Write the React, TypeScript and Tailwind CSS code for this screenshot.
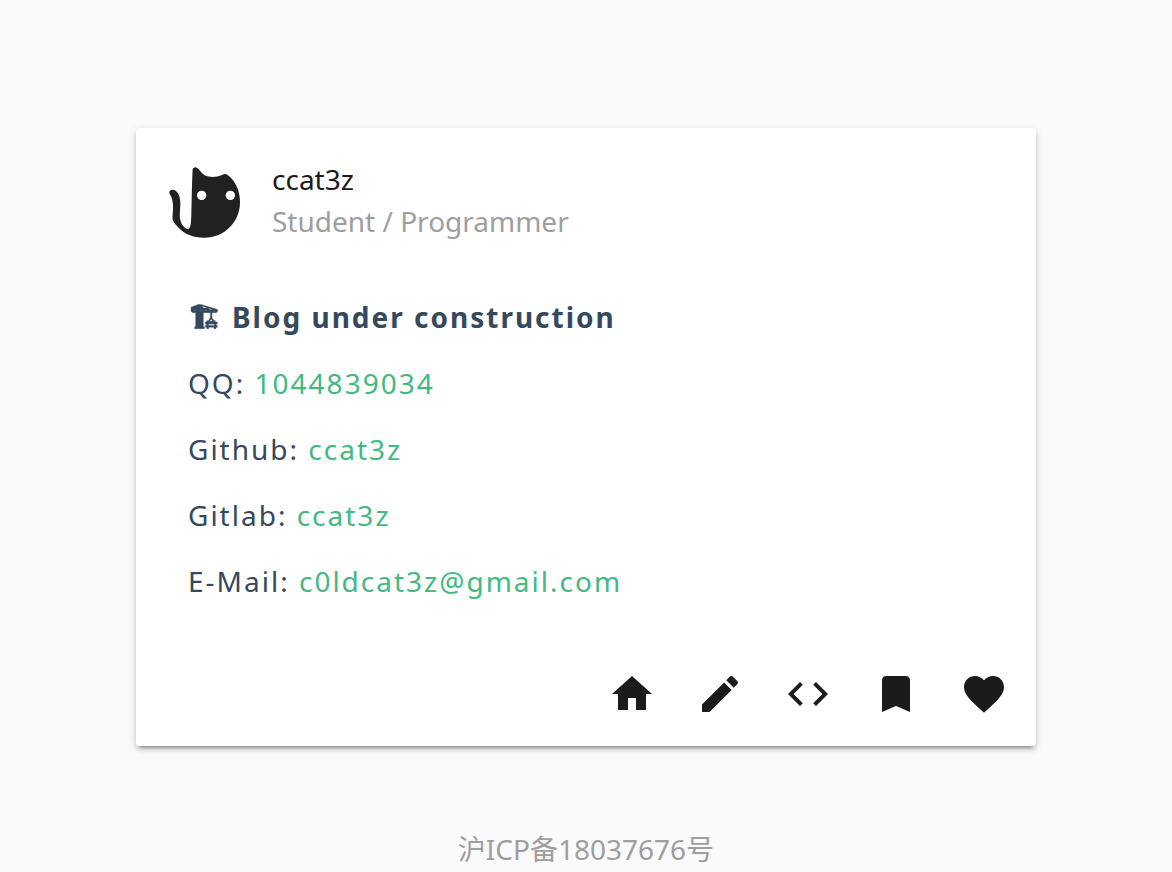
import React from "react";
import { MdBookmark, MdCode, MdEdit, MdFavorite, MdHome } from "react-icons/md";

const contacts = [
  { label: "QQ", value: "1044839034", href: "#qq" },
  { label: "Github", value: "ccat3z", href: "https://github.com/ccat3z" },
  { label: "Gitlab", value: "ccat3z", href: "https://gitlab.com/ccat3z" },
  { label: "E-Mail", value: "c0ldcat3z@gmail.com", href: "mailto:c0ldcat3z@gmail.com" },
];

const links = [
  { label: "Home", href: "#home", Icon: MdHome },
  { label: "Blog", href: "#blog", Icon: MdEdit },
  { label: "Code", href: "#code", Icon: MdCode },
  { label: "Bookmarks", href: "#bookmarks", Icon: MdBookmark },
  { label: "Friends", href: "#friends", Icon: MdFavorite },
];

function CatAvatar() {
  return (
    <svg viewBox="36 42 216 216" className="mt-2 size-[72px] shrink-0" role="img" aria-label="Cat">
      <path
        fill="#212121"
        d="M110 50Q116 42 124 48C132 54 136 64 146 70C162 77 182 76 198 69Q208 63 214 68C236 84 252 112 252 150C252 210 206 257 145 257C110 257 85 244 71 230C62 221 54 213 50 203C48 190 52 178 51 160C50 145 47 134 41 126C37 116 46 111 54 114C68 119 73 138 73 156C73 176 69 190 74 208C79 222 88 231 96 231C104 231 105 215 106 190C107 140 108 90 110 50Z"
      />
      <circle cx="137" cy="130" r="14" fill="#fff" />
      <circle cx="223" cy="130" r="14" fill="#fff" />
    </svg>
  );
}

function CraneIcon() {
  return (
    <svg viewBox="0 0 96 102" className="h-[34px] w-8 shrink-0" aria-hidden="true">
      <g fill="currentColor" stroke="currentColor" strokeWidth="1">
        <path d="M9 22L32 13L42 14L87 28Q90 30 89 34Q88 38 83 38H46V80H49V86H20V80H23V38H14L9 34Z" />
        <path d="M67 38H72V53L79 62H82V66H88V72H84V76H88V82H84V86H78V82H62V86H56V82H52V76H56V72H52V66H56V62H61L67 53Z" />
      </g>
      <g fill="#fff">
        <path d="M43 19L58 24L46 23Z" />
        <path d="M62 25L75 29L64 28Z" />
        <path d="M62 73H79V76H62Z" />
        <path d="M69.500 58L73 64H66Z" />
        <path d="M18 29H24V31H18ZM37 29H43V31H37ZM52 31H57V33H52ZM65 32H70V34H65ZM78 33H82V35H78Z" opacity=".35" />
      </g>
    </svg>
  );
}

export default function App() {
  return (
    <div className="flex min-h-screen flex-col items-center bg-[#fafafa] px-8 pt-32 font-['Noto_Sans','Noto_Sans_CJK_SC',sans-serif] text-[28px] leading-[42px] text-[#1b1b1b]">
      <main className="w-full max-w-[900px] rounded bg-white shadow-[0_6px_2px_-4px_rgba(0,0,0,0.2),0_4px_4px_rgba(0,0,0,0.14),0_2px_10px_rgba(0,0,0,0.12)]">
        <header className="flex items-start gap-8 px-8 pt-[30px] pb-[34px]">
          <CatAvatar />
          <div>
            <h1>ccat3z</h1>
            <p className="text-[#9e9e9e]">Student / Programmer</p>
          </div>
        </header>
        <section className="flex flex-col gap-6 px-[52px] pt-5 pb-10 tracking-[2px] text-[#34495e]">
          <h2 className="flex items-center gap-3 font-bold">
            <CraneIcon />
            Blog under construction
          </h2>
          {contacts.map(({ label, value, href }) => (
            <p key={label}>
              {label}:{" "}
              <a href={href} className="text-[#42b983]">
                {value}
              </a>
            </p>
          ))}
        </section>
        <nav className="flex justify-end gap-10 px-7 py-7">
          {links.map(({ label, href, Icon }) => (
            <a key={label} href={href} aria-label={label}>
              <Icon className="size-12" />
            </a>
          ))}
        </nav>
      </main>
      <footer className="pt-[82px] text-[#9e9e9e]">沪ICP备18037676号</footer>
    </div>
  );
}
